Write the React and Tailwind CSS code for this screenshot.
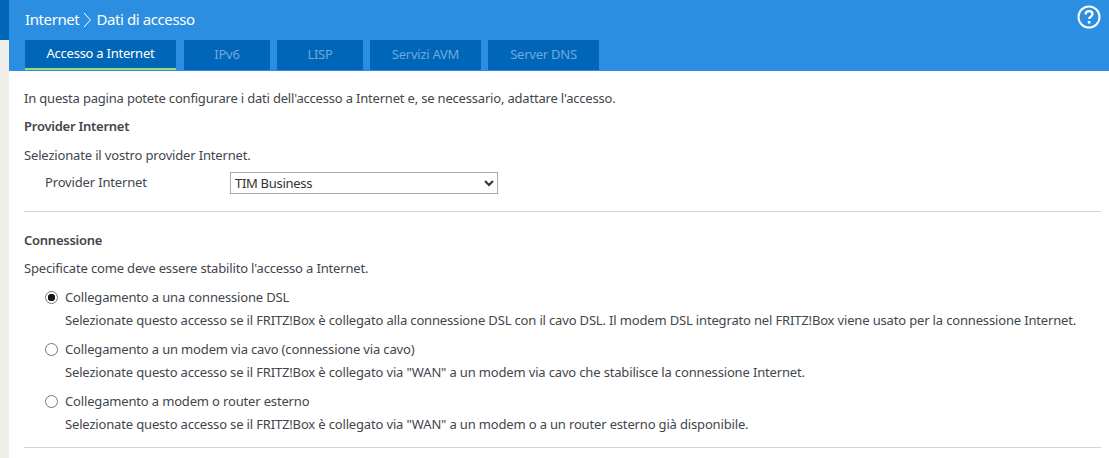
import React from "react";

const tabs = ["IPv6", "LISP", "Servizi AVM", "Server DNS"];
const tabWidths = ["w-[86px]", "w-[86px]", "w-[111px]", "w-[111px]"];

const options = [
  {
    label: "Collegamento a una connessione DSL",
    text: "Selezionate questo accesso se il FRITZ!Box è collegato alla connessione DSL con il cavo DSL. Il modem DSL integrato nel FRITZ!Box viene usato per la connessione Internet.",
    checked: true,
  },
  {
    label: "Collegamento a un modem via cavo (connessione via cavo)",
    text: 'Selezionate questo accesso se il FRITZ!Box è collegato via "WAN" a un modem via cavo che stabilisce la connessione Internet.',
  },
  {
    label: "Collegamento a modem o router esterno",
    text: 'Selezionate questo accesso se il FRITZ!Box è collegato via "WAN" a un modem o a un router esterno già disponibile.',
  },
];

export default function App() {
  return (
    <div className="flex h-[458px] w-[1109px] overflow-hidden bg-[#f0eee8] font-['Noto_Sans',sans-serif] text-[13px] tracking-[-0.16px] text-[#3f464c]">
      <div className="flex w-[9px] shrink-0 flex-col">
        <div className="h-[40px] bg-[#0066b8]" />
      </div>
      <div className="flex-1 bg-white">
        <div className="relative h-[71px] bg-[#2b8ee0] pl-[16px] pr-[8px]">
          <div className="flex h-[40px] items-center pb-[1px] text-[15px] tracking-[-0.4px] text-white">
            <span>Internet</span>
            <svg width="9" height="16" viewBox="0 0 9 16" className="mx-[4px]" fill="none" stroke="white" strokeWidth="1">
              <path d="M1 1l6.5 7L1 15" />
            </svg>
            <span>Dati di accesso</span>
          </div>
          <svg width="24" height="24" viewBox="0 0 24 24" fill="none" className="absolute right-[8px] top-[5px]">
            <circle cx="12" cy="12" r="10.5" stroke="white" strokeWidth="2" />
            <path d="M8.6 9.4c0-2 1.5-3.2 3.5-3.2s3.4 1.2 3.4 2.9c0 2.6-3.3 2.5-3.3 5" stroke="white" strokeWidth="2.2" />
            <rect x="10.8" y="16" width="2.6" height="2.6" fill="white" />
          </svg>
          <div className="flex h-[30px] tracking-[-0.25px]">
            <div className="mr-[8px] flex w-[151px] items-center justify-center border-b-2 border-[#a5d86e] bg-[#0066b8] text-white">
              Accesso a Internet
            </div>
            <div className="flex gap-[7px]">
              {tabs.map((t, i) => (
                <div key={t} className={`flex items-center justify-center bg-[#0066b8] text-[#6fa9dc] ${tabWidths[i]}`}>
                  {t}
                </div>
              ))}
            </div>
          </div>
        </div>

        <div className="pl-[15px] pr-[8px]">
          <p className="mt-[18px] leading-[18px] tracking-[-0.19px]">
            In questa pagina potete configurare i dati dell'accesso a Internet e, se necessario, adattare l'accesso.
          </p>
          <h2 className="mt-[10px] font-semibold leading-[18px] tracking-[-0.25px]">Provider Internet</h2>
          <p className="mt-[11px] leading-[18px]">Selezionate il vostro provider Internet.</p>
          <div className="mt-[8px] flex items-center pl-[21px]">
            <span className="w-[185px]">Provider Internet</span>
            <select defaultValue="TIM Business" className="h-[22px] w-[268px] border border-[#a9a9a9] bg-white tracking-[-0.3px] text-[#333]">
              <option>TIM Business</option>
            </select>
          </div>
          <div className="mt-[17px] border-t border-[#d5d5d5]" />

          <h2 className="mt-[19px] font-semibold leading-[18px] tracking-[-0.25px]">Connessione</h2>
          <p className="mt-[10px] leading-[18px]">Specificate come deve essere stabilito l'accesso a Internet.</p>
          <div className="mt-[11px] flex flex-col gap-[11px] pl-[21px]">
            {options.map((o) => (
              <div key={o.label}>
                <label className="flex items-center gap-[7px] leading-[18px]">
                  <input
                    type="radio"
                    name="conn"
                    defaultChecked={o.checked}
                    className="h-[13px] w-[13px] shrink-0 appearance-none rounded-full border border-[#767676] bg-white checked:bg-[radial-gradient(circle,#1a1a1a_3.5px,#fff_4px)]"
                  />
                  <span>{o.label}</span>
                </label>
                <p className="mt-[5px] whitespace-nowrap pl-[20px] leading-[18px]">{o.text}</p>
              </div>
            ))}
          </div>
          <div className="mt-[14px] border-t border-[#d5d5d5]" />
        </div>
      </div>
    </div>
  );
}
